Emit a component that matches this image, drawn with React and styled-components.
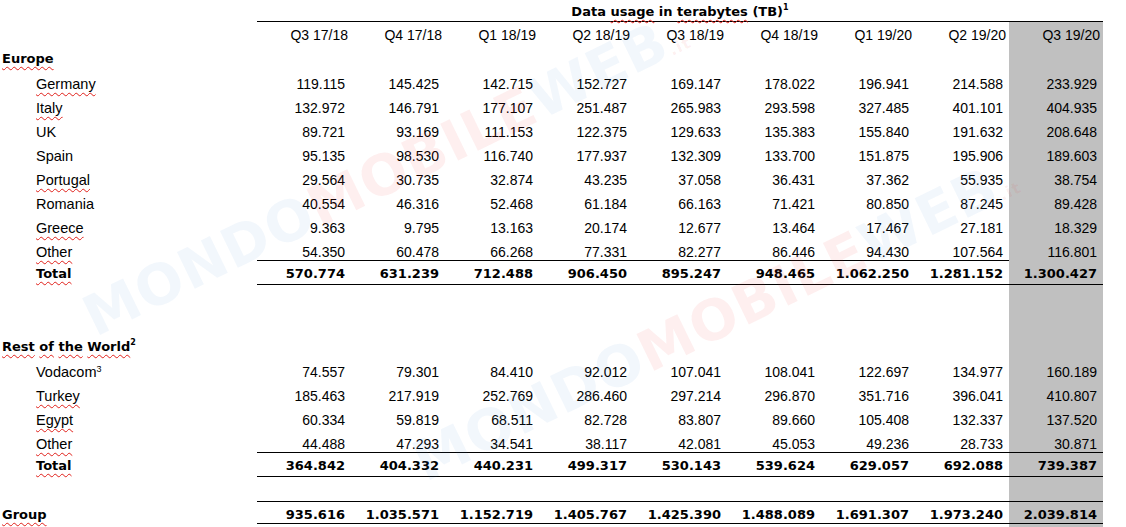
import React from "react";
import styled, { createGlobalStyle } from "styled-components";

const GlobalStyle = createGlobalStyle`
  html, body { margin: 0; padding: 0; background: #ffffff; }
  body { font-family: "Liberation Sans", Arial, sans-serif; color: #000; }
`;

const SHADE = "#c0c0c0";
const QUARTERS = ["Q3 17/18", "Q4 17/18", "Q1 18/19", "Q2 18/19", "Q3 18/19", "Q4 18/19", "Q1 19/20", "Q2 19/20", "Q3 19/20"];

const EUROPE = [
  { name: "Germany", sq: true, v: ["119.115", "145.425", "142.715", "152.727", "169.147", "178.022", "196.941", "214.588", "233.929"] },
  { name: "Italy", sq: true, v: ["132.972", "146.791", "177.107", "251.487", "265.983", "293.598", "327.485", "401.101", "404.935"] },
  { name: "UK", v: ["89.721", "93.169", "111.153", "122.375", "129.633", "135.383", "155.840", "191.632", "208.648"] },
  { name: "Spain", v: ["95.135", "98.530", "116.740", "177.937", "132.309", "133.700", "151.875", "195.906", "189.603"] },
  { name: "Portugal", sq: true, v: ["29.564", "30.735", "32.874", "43.235", "37.058", "36.431", "37.362", "55.935", "38.754"] },
  { name: "Romania", v: ["40.554", "46.316", "52.468", "61.184", "66.163", "71.421", "80.850", "87.245", "89.428"] },
  { name: "Greece", sq: true, v: ["9.363", "9.795", "13.163", "20.174", "12.677", "13.464", "17.467", "27.181", "18.329"] },
];
const EUROPE_OTHER = ["54.350", "60.478", "66.268", "77.331", "82.277", "86.446", "94.430", "107.564", "116.801"];
const EUROPE_TOTAL = ["570.774", "631.239", "712.488", "906.450", "895.247", "948.465", "1.062.250", "1.281.152", "1.300.427"];

const ROW_DATA = [
  { name: "Vodacom", sup: "3", v: ["74.557", "79.301", "84.410", "92.012", "107.041", "108.041", "122.697", "134.977", "160.189"] },
  { name: "Turkey", sq: true, v: ["185.463", "217.919", "252.769", "286.460", "297.214", "296.870", "351.716", "396.041", "410.807"] },
  { name: "Egypt", sq: true, v: ["60.334", "59.819", "68.511", "82.728", "83.807", "89.660", "105.408", "132.337", "137.520"] },
];
const ROW_OTHER = ["44.488", "47.293", "34.541", "38.117", "42.081", "45.053", "49.236", "28.733", "30.871"];
const ROW_TOTAL = ["364.842", "404.332", "440.231", "499.317", "530.143", "539.624", "629.057", "692.088", "739.387"];
const GROUP = ["935.616", "1.035.571", "1.152.719", "1.405.767", "1.425.390", "1.488.089", "1.691.307", "1.973.240", "2.039.814"];

const Page = styled.div`
  position: relative;
  width: 1126px;
  height: 527px;
  overflow: hidden;
  background: #fff;
`;

const Table = styled.div`
  display: flex;
  flex-direction: column;
`;

const Row = styled.div`
  display: grid;
  grid-template-columns: 257px repeat(9, 94px);
  height: ${(p) => p.$h}px;
`;

const Label = styled.div`
  padding-top: ${(p) => p.$pt}px;
  padding-left: ${(p) => (p.$indent ? 36 : 2)}px;
  font-family: ${(p) => (p.$bold ? '"DejaVu Sans", Tahoma, sans-serif' : '"Liberation Sans", Arial, sans-serif')};
  font-weight: ${(p) => (p.$bold ? 700 : 400)};
  font-size: ${(p) => (p.$bold ? 13 : 14.5)}px;
  line-height: 16px;
  white-space: nowrap;
`;

const Cell = styled.div`
  box-sizing: border-box;
  padding-top: ${(p) => p.$pt}px;
  padding-right: ${(p) => (p.$head ? 3 : 6)}px;
  text-align: right;
  font-family: ${(p) => (p.$bold ? '"DejaVu Sans", Tahoma, sans-serif' : '"Liberation Sans", Arial, sans-serif')};
  font-weight: ${(p) => (p.$bold ? 700 : 400)};
  font-size: ${(p) => (p.$bold ? 13 : 14)}px;
  line-height: 16px;
  white-space: nowrap;
  background: ${(p) => (p.$shade ? SHADE : "transparent")};
  border-bottom: ${(p) => (p.$rule ? "1px solid #000" : "none")};
`;

const Title = styled.div`
  grid-column: 2 / -1;
  box-sizing: border-box;
  padding-top: 4px;
  text-align: center;
  font-family: "DejaVu Sans", Tahoma, sans-serif;
  font-weight: 700;
  font-size: 13px;
  line-height: 16px;
  white-space: nowrap;
  border-bottom: 1px solid #000;
`;

const Sq = styled.span`
  text-decoration-line: underline;
  text-decoration-style: wavy;
  text-decoration-color: #e0201a;
  text-decoration-thickness: 1px;
  text-underline-offset: 3px;
`;

const Sup = styled.sup`
  font-size: ${(p) => (p.$bold ? 8 : 9)}px;
  line-height: 0;
  vertical-align: ${(p) => (p.$bold ? 6 : 5)}px;
`;

const Words = ({ text, sq }) => {
  if (!sq) return text;
  const parts = text.split(" ");
  return parts.map((w, i) => (
    <React.Fragment key={i}>
      <Sq>{w}</Sq>
      {i < parts.length - 1 ? " " : null}
    </React.Fragment>
  ));
};

const DataRow = ({ h, pt, label, indent, bold, sq, sup, values, rule }) => (
  <Row $h={h}>
    <Label $pt={pt} $indent={indent} $bold={bold}>
      {label ? <Words text={label} sq={sq} /> : null}
      {sup ? <Sup $bold={bold}>{sup}</Sup> : null}
    </Label>
    {Array.from({ length: 9 }).map((_, i) => (
      <Cell key={i} $pt={pt} $bold={bold} $rule={rule} $shade={i === 8}>
        {values ? values[i] : null}
      </Cell>
    ))}
  </Row>
);

const Watermark = styled.div`
  position: absolute;
  inset: 0;
  pointer-events: none;
  overflow: hidden;
`;

const Mark = styled.div`
  position: absolute;
  left: ${(p) => p.$x}px;
  top: ${(p) => p.$y}px;
  transform-origin: 0 0;
  transform: rotate(-26deg);
  font-family: "DejaVu Sans", sans-serif;
  font-weight: 700;
  font-size: 56px;
  line-height: 1;
  white-space: nowrap;
  letter-spacing: 1px;
`;

const Blue = styled.span`
  color: rgba(60, 130, 210, 0.065);
`;
const Red = styled.span`
  color: rgba(235, 40, 40, 0.075);
  font-size: ${(p) => (p.$small ? 16 : 56)}px;
`;

const MarkText = ({ x, y }) => (
  <Mark $x={x} $y={y}>
    <Blue>MONDO</Blue>
    <Red>MOBILE</Red>
    <Blue>WEB</Blue>
    <Red $small>.it</Red>
  </Mark>
);

export default function App() {
  return (
    <Page>
      <GlobalStyle />
      <Table>
        <Row $h={22}>
          <Title>
            Data <Sq>usage</Sq> in <Sq>terabytes</Sq> (TB)<Sup $bold>1</Sup>
          </Title>
        </Row>
        <Row $h={25}>
          <Label $pt={5} />
          {QUARTERS.map((q, i) => (
            <Cell key={q} $head $pt={5} $shade={i === 8}>
              {q}
            </Cell>
          ))}
        </Row>
        <DataRow h={25} pt={4} label="Europe" bold sq />
        {EUROPE.map((r) => (
          <DataRow key={r.name} h={24} pt={4} label={r.name} indent sq={r.sq} values={r.v} />
        ))}
        <DataRow h={20} pt={4} label="Other" indent sq values={EUROPE_OTHER} rule />
        <DataRow h={25} pt={6} label="Total" indent bold sq values={EUROPE_TOTAL} rule />
        <DataRow h={50} pt={0} />
        <DataRow h={25} pt={4} label="Rest of the World" bold sq sup="2" />
        {ROW_DATA.map((r) => (
          <DataRow key={r.name} h={24} pt={4} label={r.name} indent sq={r.sq} sup={r.sup} values={r.v} />
        ))}
        <DataRow h={21} pt={4} label="Other" indent sq values={ROW_OTHER} rule />
        <DataRow h={24} pt={5} label="Total" indent bold sq values={ROW_TOTAL} rule />
        <DataRow h={25} pt={0} rule />
        <DataRow h={22} pt={5} label="Group" bold sq values={GROUP} rule />
        <DataRow h={10} pt={0} />
      </Table>
      <Watermark>
        <MarkText x={75} y={295} />
        <MarkText x={405} y={440} />
      </Watermark>
    </Page>
  );
}
